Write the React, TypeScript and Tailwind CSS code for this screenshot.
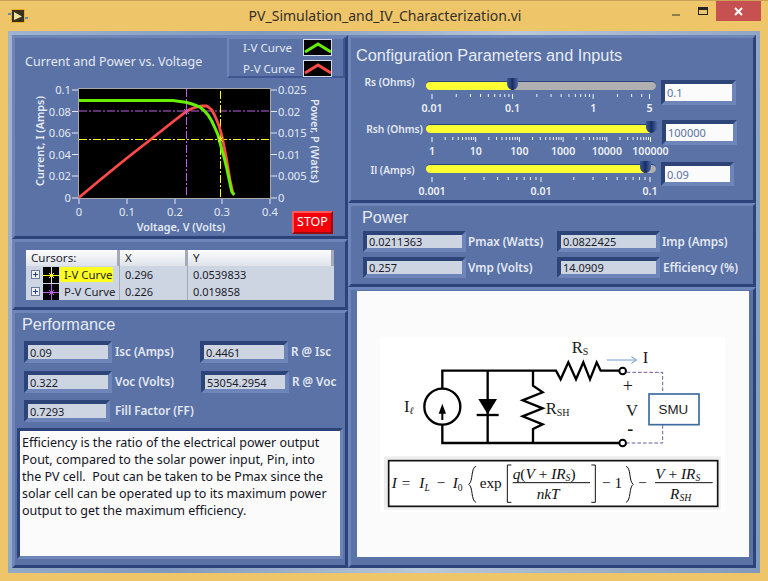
import React from "react";

const PANEL =
  "border-[3px] border-t-[#6d85b8] border-l-[#6d85b8] border-r-[#2c4379] border-b-[#2c4379] bg-[#5a72a6]";

function Field({ value, className = "", light = false }: { value: string; className?: string; light?: boolean }) {
  return (
    <div
      className={
        "flex border-[4px] border-t-[#2d4478] border-l-[#2d4478] border-r-[#6d85b8] border-b-[#6d85b8] " + className
      }
    >
      <div
        className={
          "flex-1 flex items-center pl-[2px] text-[11px] leading-none " +
          (light ? "bg-[#fbfbfb] text-[#5a72a6]" : "bg-[#cdd5e3] text-[#1c1c28]")
        }
      >
        {value}
      </div>
    </div>
  );
}

function Label({ children, className = "" }: { children: React.ReactNode; className?: string }) {
  return <div className={"text-[11.7px] font-semibold text-[#e4e9f3] whitespace-nowrap " + className}>{children}</div>;
}

type Slide = {
  label: string;
  min: number;
  decade: number;
  start: number;
  majors: { v: number; t: string }[];
  minors: number[];
  thumb: number;
};

function Slider({
  s,
  fieldClass,
  labelClass,
  value,
  className = "",
}: {
  s: Slide;
  fieldClass: string;
  labelClass: string;
  value: string;
  className?: string;
}) {
  const pos = (v: number) => s.start + Math.log10(v / s.min) * s.decade;
  return (
    <div className={"flex items-start " + className}>
      <Label className={"w-[73px] text-center !text-[10.2px] " + labelClass}>{s.label}</Label>
      <div className="w-[230px] relative">
        <div className="h-[9px] rounded-full bg-[#b0b0b0] border-t border-[#2d4478] overflow-hidden">
          <div className="h-full bg-[#ffff33]" style={{ width: s.thumb }} />
        </div>
        <svg width="11" height="12" className="absolute -top-[3px]" style={{ left: s.thumb - 5 }}>
          <defs>
            <linearGradient id={"th" + s.start + s.thumb} x1="0" x2="1" y1="0" y2="0">
              <stop offset="0" stopColor="#3a5a9c" />
              <stop offset="0.5" stopColor="#1a2f62" />
              <stop offset="1" stopColor="#4a68a8" />
            </linearGradient>
          </defs>
          <path d="M0 0H11V6Q11 10 6.5 12H4.5Q0 10 0 6Z" fill={"url(#th" + s.start + s.thumb + ")"} />
        </svg>
        <svg width="230" height="27" className="overflow-visible block">
          {s.minors.map((v) => (
            <line key={v} x1={pos(v)} x2={pos(v)} y1="4" y2="7" stroke="#f2f4f8" />
          ))}
          {s.majors.map((m) => (
            <g key={m.t}>
              <line x1={pos(m.v)} x2={pos(m.v)} y1="4" y2="9" stroke="#f2f4f8" />
              <text x={pos(m.v)} y="21.5" textAnchor="middle" fontSize="10.6" fontWeight="600" fill="#eef1f7">
                {m.t}
              </text>
            </g>
          ))}
        </svg>
      </div>
      <Field value={value} light className={fieldClass} />
    </div>
  );
}

const minorsFor = (from: number, to: number) => {
  const out: number[] = [];
  for (let d = from; d < to - 1e-9; d *= 10) {
    for (let k = 2; k <= 9; k++) {
      if (d * k < to) out.push(d * k);
    }
  }
  return out;
};

const rs: Slide = {
  label: "Rs (Ohms)",
  min: 0.01,
  decade: 80.6,
  start: 6,
  majors: [
    { v: 0.01, t: "0.01" },
    { v: 0.1, t: "0.1" },
    { v: 1, t: "1" },
    { v: 5, t: "5" },
  ],
  minors: minorsFor(0.01, 5),
  thumb: 86,
};
const rsh: Slide = {
  label: "Rsh (Ohms)",
  min: 1,
  decade: 43.7,
  start: 6,
  majors: [
    { v: 1, t: "1" },
    { v: 10, t: "10" },
    { v: 100, t: "100" },
    { v: 1000, t: "1000" },
    { v: 10000, t: "10000" },
    { v: 100000, t: "100000" },
  ],
  minors: minorsFor(1, 100000),
  thumb: 225,
};
const il: Slide = {
  label: "Il (Amps)",
  min: 0.001,
  decade: 109,
  start: 6,
  majors: [
    { v: 0.001, t: "0.001" },
    { v: 0.01, t: "0.01" },
    { v: 0.1, t: "0.1" },
  ],
  minors: minorsFor(0.001, 0.1),
  thumb: 219,
};

const greenPts =
  "79,100.5 173,100.5 180,101.5 187,102.5 192,104 196,105.5 200,107 204,110.5 208,115 212,121.5 215,128 218,135 221.7,149 224,157 226.7,168 229,179 231.7,191.5 233,193.5 234.5,194.5";
const redPts =
  "79,197.5 100,180 127,158 150,140 170,124 187,111 192,108.5 197,106.8 202,105.8 206.7,106 209,107.5 211.7,110 214,114 216.7,120 219,126 221.7,135 224,146 226.7,160 230,180 232,189 233.3,194 234.5,194.5";

function Chart() {
  const ly = [
    { y: 90, a: "0.1", b: "0.025" },
    { y: 111.5, a: "0.08", b: "0.02" },
    { y: 133, a: "0.06", b: "0.015" },
    { y: 154.5, a: "0.04", b: "0.01" },
    { y: 176, a: "0.02", b: "0.005" },
    { y: 198, a: "0", b: "0" },
  ];
  const lx = [
    { x: 79, t: "0" },
    { x: 127, t: "0.1" },
    { x: 175, t: "0.2" },
    { x: 222, t: "0.3" },
    { x: 270, t: "0.4" },
  ];
  return (
    <svg width="330" height="157" viewBox="15 78 330 157" className="block">
      <rect x="78.5" y="88.5" width="192" height="110" fill="#000" stroke="#a9a9a9" />
      <line x1="79" x2="270" y1="111" y2="111" stroke="#c060e8" strokeDasharray="8 2 2 2" />
      <line x1="186.5" x2="186.5" y1="89" y2="195" stroke="#c060e8" strokeDasharray="8 2 2 2" />
      <line x1="79" x2="270" y1="139.5" y2="139.5" stroke="#ffff20" strokeDasharray="8 2 2 2" />
      <line x1="220.5" x2="220.5" y1="91" y2="198" stroke="#ffff20" strokeDasharray="8 2 2 2" />
      <polyline points={redPts} fill="none" stroke="#ff4a4a" strokeWidth="2.8" />
      <polyline points={greenPts} fill="none" stroke="#66f000" strokeWidth="3" />
      <path d="M184 109l5 5m0-5l-5 5" stroke="#c060e8" />
      <path d="M218 137l5 5m0-5l-5 5" stroke="#ffff20" />
      {ly.map((l) => (
        <g key={l.y} fontSize="11.2" fill="#e4e9f3">
          <line x1="72" x2="78" y1={l.y} y2={l.y} stroke="#e4e9f3" />
          <line x1="271" x2="277" y1={l.y} y2={l.y} stroke="#e4e9f3" />
          <text x="71" y={l.y + 4} textAnchor="end">
            {l.a}
          </text>
          <text x="278" y={l.y + 4}>
            {l.b}
          </text>
        </g>
      ))}
      {lx.map((l) => (
        <g key={l.x} fontSize="11.2" fill="#e4e9f3">
          <line x1={l.x} x2={l.x} y1="199" y2="204" stroke="#e4e9f3" />
          <text x={l.x} y="216" textAnchor="middle">
            {l.t}
          </text>
        </g>
      ))}
      <g fontSize="10.8" fontWeight="600" fill="#e4e9f3">
        <text x="181" y="231" textAnchor="middle">
          Voltage, V (Volts)
        </text>
        <text transform="translate(43.5 141) rotate(-90)" textAnchor="middle">
          Current, I (Amps)
        </text>
        <text transform="translate(311 141) rotate(90)" textAnchor="middle">
          Power, P (Watts)
        </text>
      </g>
    </svg>
  );
}

function Swatch({ color }: { color: string }) {
  return (
    <svg width="29" height="17" className="block border border-[#d5dbe8] bg-black">
      <polyline points="1,12 14,4 27,12" fill="none" stroke={color} strokeWidth="3" />
    </svg>
  );
}

function Legend() {
  return (
    <div className="w-[118px] h-[41px] -mt-[1px] border-[2px] border-t-[#6d85b8] border-l-[#6d85b8] border-r-[#3f5690] border-b-[#3f5690] flex flex-col pl-[14px] gap-[4px] text-[11.5px] text-[#e4e9f3]">
      <div className="flex items-center h-[17px] justify-between pr-[11px]">
        <span>I-V Curve</span>
        <Swatch color="#66f000" />
      </div>
      <div className="flex items-center h-[17px] justify-between pr-[11px]">
        <span>P-V Curve</span>
        <Swatch color="#ff4a4a" />
      </div>
    </div>
  );
}

function CursorIcon({ color }: { color: string }) {
  return (
    <svg width="16" height="16" className="block bg-black shrink-0">
      <path d="M0 8.5h16M8.5 0v16" stroke={color} strokeWidth="1" />
      <path d="M6 6l5 5m0-5l-5 5" stroke={color} />
    </svg>
  );
}

function Expander() {
  return (
    <div className="w-[9px] h-[9px] bg-[#eef1f7] border border-[#6a7a9a] flex items-center justify-center shrink-0 relative">
      <div className="w-[5px] h-[1px] bg-[#2b3f8a]" />
      <div className="absolute w-[1px] h-[5px] bg-[#2b3f8a]" />
    </div>
  );
}

function CursorTable() {
  const head =
    "h-[16px] bg-[linear-gradient(#fbfcfe,#dfe3ea)] flex items-center pl-[5px] border-r-[3px] border-[#a3a9b6] text-[11.6px]";
  const cols = "grid grid-cols-[94px_68px_146px]";
  return (
    <div className="w-[308px] h-[50px] bg-[#cdd5e3] text-[11px] leading-none text-[#1c1c28]">
      <div className={cols}>
        <div className={head}>Cursors:</div>
        <div className={head}>X</div>
        <div className={head + " border-r-0"}>Y</div>
      </div>
      {[
        { n: "I-V Curve", c: "#ffff20", x: "0.296", y: "0.0539833", hi: true },
        { n: "P-V Curve", c: "#c060e8", x: "0.226", y: "0.019858", hi: false },
      ].map((r) => (
        <div key={r.n} className={cols + " h-[17px]"}>
          <div className="flex items-center pl-[5px] border-r border-[#a3a9b6]">
            <Expander />
            <div className="ml-[3px]">
              <CursorIcon color={r.c} />
            </div>
            <span
              className={
                "ml-[1px] h-[15px] flex items-center pl-[4px] pr-[1px] whitespace-nowrap text-[11.4px] " + (r.hi ? "bg-[#ffff20]" : "")
              }
            >
              {r.n}
            </span>
          </div>
          <div className="flex items-center pl-[5px] border-r border-[#a3a9b6]">{r.x}</div>
          <div className="flex items-center pl-[5px]">{r.y}</div>
        </div>
      ))}
    </div>
  );
}

function Circuit() {
  const s = "#000";
  return (
    <svg width="370" height="190" viewBox="0 0 1110 570" className="block" style={{ fontFamily: "'Liberation Serif', serif" }}>
      <rect x="30" y="35" width="1035" height="525" fill="#fff" />
      <g fill="none" stroke={s} strokeWidth="7">
        <path d="M217 190V137H558L572 163 595 112 618 163 640 112 660 163 680 112 692 137H747" />
        <path d="M217 300V354H747" />
        <circle cx="217" cy="245" r="54" />
        <path d="M353 137V354" />
        <path d="M489 137V182L518 202 458 226 518 250 458 274 518 298 489 312V354" />
        <path d="M320 270H386" />
        <circle cx="758" cy="138" r="10" fill="#fff" strokeWidth="6" />
        <circle cx="758" cy="354" r="10" fill="#fff" strokeWidth="6" />
      </g>
      <path d="M325 222H381L353 268Z" fill={s} />
      <path d="M217 285V262" stroke={s} strokeWidth="6" />
      <path d="M206 266H228L217 236Z" fill={s} />
      <path d="M710 105H798M784 95L800 105 784 115" fill="none" stroke="#6f9ed6" strokeWidth="3" />
      <path d="M770 142H878V205M878 300V354H770" fill="none" stroke="#6d5a9a" strokeWidth="3" strokeDasharray="11 6" />
      <rect x="837" y="207" width="150" height="92" fill="#fff" stroke="#3d6ba0" strokeWidth="5" />
      <g fontSize="50" fill="#1a1a1a">
        <text x="605" y="84">R<tspan fontSize="30" dy="5">S</tspan></text>
        <text x="818" y="114">I</text>
        <text x="758" y="202" fontSize="54">+</text>
        <text x="768" y="272">V</text>
        <text x="772" y="330" fontSize="54" fontWeight="700">-</text>
        <text x="102" y="260">I<tspan fontSize="30" dy="7" fontStyle="italic">ℓ</tspan></text>
        <text x="527" y="268">R<tspan fontSize="30" dy="6">SH</tspan></text>
      </g>
      <text x="910" y="267" textAnchor="middle" fontSize="40" fill="#222" style={{ fontFamily: "'Liberation Sans', sans-serif" }}>SMU</text>
      <rect x="42" y="394" width="1010" height="160" fill="#eee" />
      <rect x="56" y="407" width="987" height="137" fill="#fff" stroke="#111" strokeWidth="5" />
      <g fontSize="46" fill="#111">
        <text x="65" y="490" fontStyle="italic">I</text>
        <text x="95" y="490">=</text>
        <text x="148" y="490" fontStyle="italic">I<tspan fontSize="29" dy="7">L</tspan></text>
        <text x="200" y="490">−</text>
        <text x="248" y="490" fontStyle="italic">I<tspan fontSize="29" dy="7" fontStyle="normal">0</tspan></text>
        <text x="329" y="490">exp</text>
        <text x="428" y="462" fontStyle="italic">q<tspan fontStyle="normal">(</tspan>V<tspan fontStyle="normal"> + </tspan>IR<tspan fontSize="29" dy="7">S</tspan><tspan fontStyle="normal" dy="-7">)</tspan></text>
        <text x="500" y="522" fontStyle="italic">nkT</text>
        <text x="696" y="490">− 1</text>
        <text x="805" y="490">−</text>
        <text x="856" y="462" fontStyle="italic">V<tspan fontStyle="normal"> + </tspan>IR<tspan fontSize="29" dy="7">S</tspan></text>
        <text x="900" y="522" fontStyle="italic">R<tspan fontSize="29" dy="7">SH</tspan></text>
      </g>
      <g fill="none" stroke="#111">
        <path d="M428 473H660M855 473H1028" strokeWidth="3" />
        <path d="M424 420H412V532H424M664 420H676V532H664" strokeWidth="3" />
        <path d="M318 424C302 428 310 470 296 478 310 486 302 526 318 532" strokeWidth="3" />
        <path d="M768 424C784 428 776 470 790 478 776 486 784 526 768 532" strokeWidth="3" />
      </g>
    </svg>
  );
}

function Title({ children, className = "" }: { children: React.ReactNode; className?: string }) {
  return <div className={"[font-family:'Liberation_Sans',sans-serif] text-[#e6ebf5] leading-none " + className}>{children}</div>;
}

export default function App() {
  return (
    <div className="w-[768px] h-[581px] bg-[#efc56a] flex flex-col overflow-hidden [font-family:'Noto_Sans',sans-serif]">
      <div className="h-[31px] shrink-0 flex items-start border-t border-[#c9a257]">
        <svg width="20" height="16" viewBox="0 0 20 16" className="ml-[8px] mt-[7px] shrink-0">
          <path d="M0 6h4M16 10h4" stroke="#5f8fb8" strokeWidth="2" />
          <rect x="3.5" y="1.5" width="13" height="13" fill="#3a3020" stroke="#f0b020" />
          <path d="M6 4L14 8.5 6 12Z" fill="#efe2a0" />
        </svg>
        <div className="flex-1 text-center pl-[70px] pt-[5px] text-[14px] leading-[20px] text-[#33302a] whitespace-nowrap">
          PV_Simulation_and_IV_Characterization.vi
        </div>
        <div className="flex items-start">
          <div className="w-[8px] h-[2px] bg-[#8f7f50] mt-[13px] mr-[18px]" />
          <div className="w-[8px] h-[4px] border border-t-[3px] border-[#222] mt-[6px] mr-[8px] box-content" />
          <div className="w-[45px] h-[20px] bg-[#c75050] flex items-center justify-center mr-[7px]">
            <svg width="9" height="9" viewBox="0 0 9 9">
              <path d="M1 1l7 7m0-7l-7 7" stroke="#fff" strokeWidth="2" />
            </svg>
          </div>
        </div>
      </div>

      <div className="mx-[8px] h-[542px] shrink-0 p-[4px] flex bg-[linear-gradient(100deg,#9fb4cf,#7f98bd_30%,#b9c8da_60%,#8098bb)]">
        <div className="w-[336px] flex flex-col">
          <div className={PANEL + " h-[204px] relative"}>
            <div className="flex justify-between h-[40px]">
              <div className="pl-[10px] pt-[15px] text-[12.5px] text-[#e4e9f3]">Current and Power vs. Voltage</div>
              <Legend />
            </div>
            <Chart />
            <div className="absolute right-[12px] bottom-[2px] w-[41px] h-[23px] bg-[#f5000a] border-[2px] border-t-[#ff5a5a] border-l-[#ff5a5a] border-r-[#9c0a12] border-b-[#9c0a12] flex items-center justify-center text-[12.5px] text-white">
              STOP
            </div>
          </div>

          <div className={PANEL + " h-[71px] pl-[11px] pt-[8px]"}>
            <CursorTable />
          </div>

          <div className={PANEL + " h-[258px] pt-[3px]"}>
            <Title className="text-[16.3px] pl-[7px] h-[17px]">Performance</Title>
            <div className="flex items-center pl-[9px] mt-[8px]">
              <Field value="0.09" className="w-[88px] h-[22px]" />
              <Label className="ml-[3px] w-[85px]">Isc (Amps)</Label>
              <Field value="0.4461" className="w-[88px] h-[22px]" />
              <Label className="ml-[3px]">R @ Isc</Label>
            </div>
            <div className="flex items-center pl-[9px] mt-[8px]">
              <Field value="0.322" className="w-[88px] h-[22px]" />
              <Label className="ml-[3px] w-[86px]">Voc (Volts)</Label>
              <Field value="53054.2954" className="w-[88px] h-[22px]" />
              <Label className="ml-[3px]">R @ Voc</Label>
            </div>
            <div className="flex items-center pl-[9px] mt-[7px]">
              <Field value="0.7293" className="w-[86px] h-[22px]" />
              <Label className="ml-[5px]">Fill Factor (FF)</Label>
            </div>
            <div className="ml-[2px] mt-[6px] w-[326px] h-[131px] border-[3px] border-[#2c4379] border-b-[#6d85b8] border-r-[#6d85b8] bg-[#fbfbfb] pl-[2px] pt-[3px] text-[12.5px] leading-[17px] text-[#14141e] whitespace-pre">
              {"Efficiency is the ratio of the electrical power output\nPout, compared to the solar power input, Pin, into\nthe PV cell.  Pout can be taken to be Pmax since the\nsolar cell can be operated up to its maximum power\noutput to get the maximum efficiency."}
            </div>
          </div>
        </div>

        <div className="w-[408px] flex flex-col">
          <div className={PANEL + " h-[168px] pl-[2px] pt-[9px]"}>
            <Title className="text-[16.3px] pl-[3px] h-[24px]">Configuration Parameters and Inputs</Title>
            <Slider s={rs} value="0.1" labelClass="-mt-[6px]" className="mt-[10px] h-[43px]" fieldClass="w-[75px] h-[25px] ml-[5px] -mt-[1px]" />
            <Slider s={rsh} value="100000" labelClass="-mt-[2px] pl-[10px]" className="h-[40px]" fieldClass="w-[75px] h-[25px] ml-[6px] -mt-[4px]" />
            <Slider s={il} value="0.09" labelClass="-mt-[1px] pl-[6px]" className="h-[30px]" fieldClass="w-[73px] h-[24px] ml-[5px] -mt-[2px]" />
          </div>

          <div className={PANEL + " h-[84px] pl-[12px] pt-[3px]"}>
            <Title className="text-[16.3px] -ml-[1px] h-[22px]">Power</Title>
            <div className="flex items-center h-[21px]">
              <Field value="0.0211363" className="w-[103px] h-[21px]" />
              <Label className="ml-[2px] w-[89px]">Pmax (Watts)</Label>
              <Field value="0.0822425" className="w-[103px] h-[21px]" />
              <Label className="ml-[2px]">Imp (Amps)</Label>
            </div>
            <div className="flex items-center h-[21px] mt-[5px]">
              <Field value="0.257" className="w-[103px] h-[21px]" />
              <Label className="ml-[2px] w-[89px]">Vmp (Volts)</Label>
              <Field value="14.0909" className="w-[103px] h-[21px]" />
              <Label className="ml-[3px]">Efficiency (%)</Label>
            </div>
          </div>

          <div className={PANEL + " h-[281px] p-[1px] pb-[8px] pl-[6px] pr-[4px]"}>
            <div className="h-full bg-[#fbfbfb] pl-[13px] pt-[34px]">
              <Circuit />
            </div>
          </div>
        </div>
      </div>
    </div>
  );
}
